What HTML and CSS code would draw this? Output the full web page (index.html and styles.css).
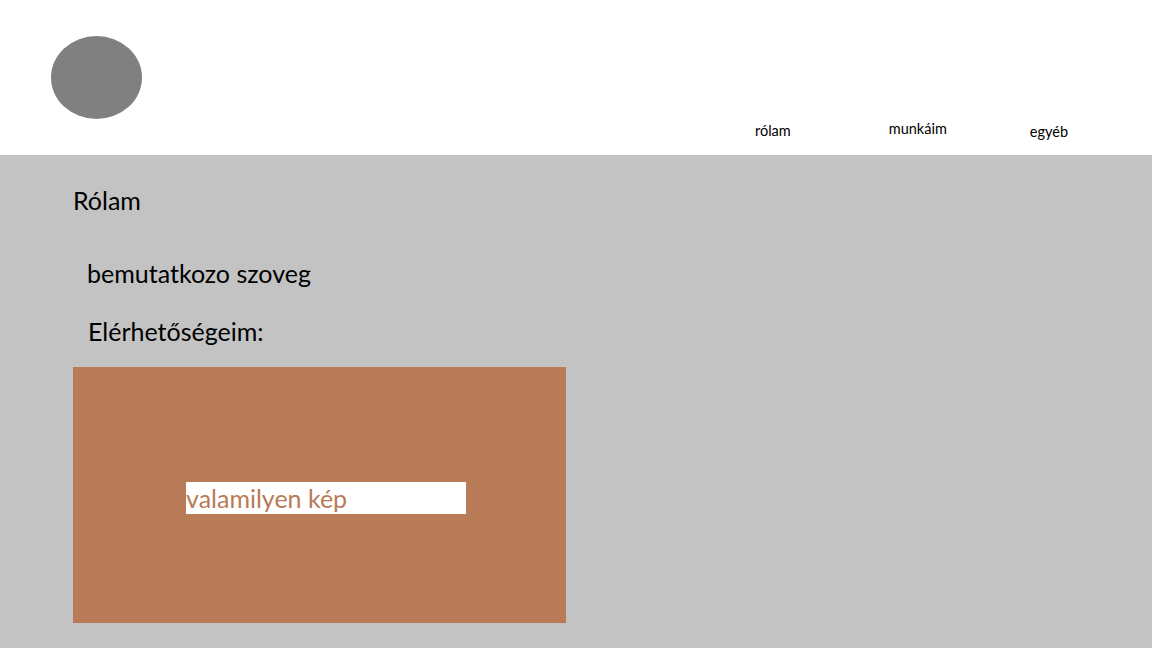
FILE: index.html
```html
<!DOCTYPE html>
<html lang="hu">
<head>
<meta charset="utf-8">
<title>Rólam</title>
<link rel="stylesheet" href="styles.css">
</head>
<body>
<header class="header">
  <div class="logo"></div>
  <nav class="nav">
    <a class="nav-item nav-rolam" href="#">rólam</a>
    <a class="nav-item nav-munkaim" href="#">munkáim</a>
    <a class="nav-item nav-egyeb" href="#">egyéb</a>
  </nav>
</header>
<main class="main">
  <h1 class="title">Rólam</h1>
  <p class="intro">bemutatkozo szoveg</p>
  <p class="contact">Elérhetőségeim:</p>
  <div class="picture">
    <span class="picture-label">valamilyen kép</span>
  </div>
</main>
</body>
</html>
```
FILE: styles.css
```css
html, body {
  margin: 0;
  padding: 0;
}
body {
  width: 1152px;
  height: 648px;
  overflow: hidden;
  font-family: Lato, "Open Sans", sans-serif;
  color: #000;
  background: #c3c3c3;
}
.header {
  height: 155px;
  background: #fff;
  display: flex;
  box-sizing: border-box;
}
.logo {
  width: 91px;
  height: 83px;
  margin: 36px 0 0 51px;
  border-radius: 50%;
  background: #808080;
}
.nav {
  display: flex;
  margin-left: 613px;
}
.nav-item {
  color: #000;
  text-decoration: none;
  font-size: 14.5px;
  line-height: 16px;
}
.nav-rolam {
  margin-top: 123px;
}
.nav-munkaim {
  margin-top: 121px;
  margin-left: 98px;
}
.nav-egyeb {
  margin-top: 124px;
  margin-left: 83px;
}
.main {
  padding: 0 0 0 73px;
  display: flex;
  flex-direction: column;
  align-items: flex-start;
}
.title {
  margin: 30px 0 0 0;
  font-size: 25px;
  font-weight: normal;
  line-height: 30px;
}
.intro {
  margin: 43px 0 0 14px;
  font-size: 25px;
  line-height: 30px;
}
.contact {
  margin: 28px 0 0 15px;
  font-size: 25px;
  line-height: 30px;
}
.picture {
  margin-top: 21px;
  width: 493px;
  height: 256px;
  background: #b97b57;
  display: flex;
  align-items: flex-start;
}
.picture-label {
  margin: 115px 0 0 113px;
  width: 280px;
  height: 32px;
  background: #fff;
  color: #b97b57;
  font-size: 25px;
  line-height: 32px;
}
```
